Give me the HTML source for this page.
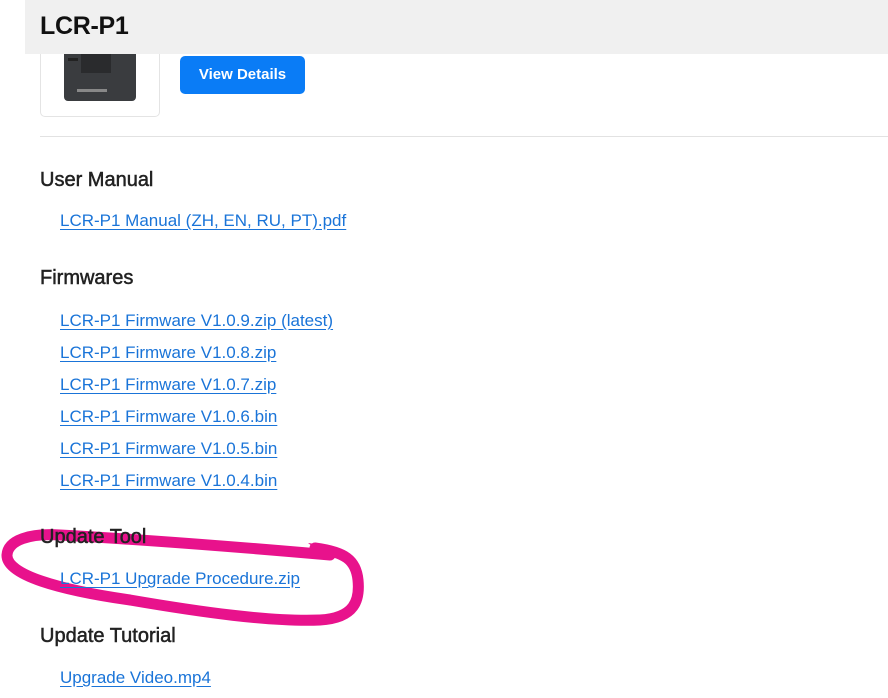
<!DOCTYPE html>
<html><head><meta charset="utf-8"><style>
body{margin:0;width:888px;height:698px;background:#fff;font-family:"Liberation Sans",sans-serif;position:relative;overflow:hidden}
.hdr{position:absolute;left:25px;top:0;width:863px;height:54px;background:#f0f0f0;z-index:2}
.hdr h1{margin:0;position:absolute;left:15px;top:12px;font-size:25px;font-weight:bold;color:#111;letter-spacing:-0.3px}
.img{position:absolute;left:40px;top:30px;width:118px;height:85px;border:1px solid #e4e4e4;border-radius:5px;background:#fff;overflow:hidden}
.dev{position:absolute;left:23px;top:10px;width:72px;height:60px;background:#3a3c3f;border-radius:4px}
.btn{position:absolute;left:180px;top:56px;width:125px;height:38px;background:#0a7cf6;border-radius:5px;color:#fff;font-size:15px;line-height:38px;text-align:center;font-weight:bold}
.hr{position:absolute;left:40px;top:136px;width:848px;height:1px;background:#e2e2e2}
h2{position:absolute;left:40px;margin:0;font-size:20px;font-weight:normal;color:#222;-webkit-text-stroke:0.5px #222;z-index:3}
a{position:absolute;left:60px;font-size:17px;color:#1a74d8;text-decoration:underline;text-underline-offset:3px;white-space:nowrap;z-index:3}
svg{z-index:1}
</style></head><body>
<div class="img"><div class="dev"></div><div style="position:absolute;left:27px;top:27px;width:10px;height:3px;background:#222"></div><div style="position:absolute;left:40px;top:12px;width:30px;height:30px;background:#2a2b2d"></div><div style="position:absolute;left:36px;top:58px;width:30px;height:3px;background:#888"></div></div>
<div class="hdr"><h1>LCR-P1</h1></div>
<div class="btn">View Details</div>
<div class="hr"></div>
<svg style="position:absolute;left:0;top:0" width="888" height="698"><path d="M330 555 C250 548 150 540 60 535 C30 533 8 540 7 555 C6 575 60 590 130 600 C200 612 270 622 320 620 C355 618 360 600 358 580 C356 560 345 552 315 548" fill="none" stroke="#e8128c" stroke-width="11" stroke-linecap="round"/><path d="M308 543 L332 546 L330 560 Z" fill="#e8128c"/></svg>
<h2 style="top:169px">User Manual</h2>
<a style="top:211px">LCR-P1 Manual (ZH, EN, RU, PT).pdf</a>
<h2 style="top:267px">Firmwares</h2>
<a style="top:311px">LCR-P1 Firmware V1.0.9.zip (latest)</a>
<a style="top:343px">LCR-P1 Firmware V1.0.8.zip</a>
<a style="top:375px">LCR-P1 Firmware V1.0.7.zip</a>
<a style="top:407px">LCR-P1 Firmware V1.0.6.bin</a>
<a style="top:439px">LCR-P1 Firmware V1.0.5.bin</a>
<a style="top:471px">LCR-P1 Firmware V1.0.4.bin</a>
<h2 style="top:526px">Update Tool</h2>
<a style="top:569px">LCR-P1 Upgrade Procedure.zip</a>
<h2 style="top:625px">Update Tutorial</h2>
<a style="top:668px">Upgrade Video.mp4</a>
</body></html>
